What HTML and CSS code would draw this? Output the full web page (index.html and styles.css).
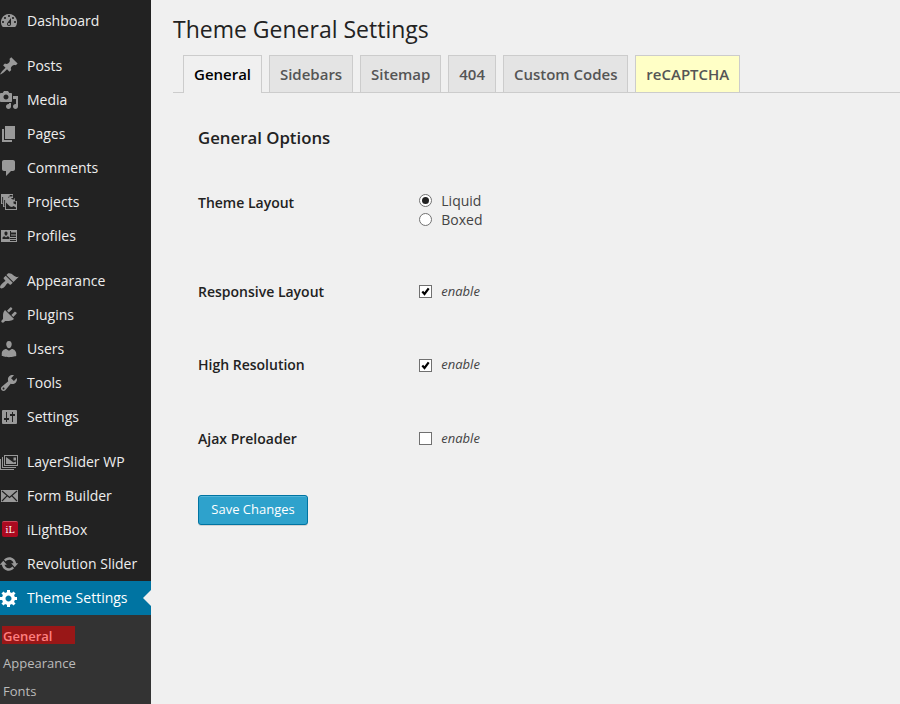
FILE: index.html
```
<!DOCTYPE html>
<html lang="en">
<head>
<meta charset="utf-8">
<title>Theme General Settings</title>
<link rel="stylesheet" href="styles.css">
</head>
<body>
<div class="layout">
  <nav class="sidebar">
    <ul class="menu">
      <li class="item"><svg class="icon" viewBox="1 0 20 20"><path fill-rule="evenodd" d="M3.76 16h12.48A7.998 7.998 0 0 0 10 3 7.998 7.998 0 0 0 3.76 16zM10 4c.55 0 1 .45 1 1s-.45 1-1 1-1-.45-1-1 .45-1 1-1zM6 6c.55 0 1 .45 1 1s-.45 1-1 1-1-.45-1-1 .45-1 1-1zm8 0c.55 0 1 .45 1 1s-.45 1-1 1-1-.45-1-1 .45-1 1-1zm-5.370 5.550L12 7v6c0 1.100-.9 2-2 2s-2-.9-2-2c0-.57.24-1.080.63-1.450zM4 10c.55 0 1 .45 1 1s-.45 1-1 1-1-.45-1-1 .45-1 1-1zm12 0c.55 0 1 .45 1 1s-.45 1-1 1-1-.45-1-1 .45-1 1-1zm-5 3c0-.55-.45-1-1-1s-1 .45-1 1 .45 1 1 1 1-.45 1-1z"/></svg>Dashboard</li>
    </ul>
    <ul class="menu">
      <li class="item"><svg class="icon" viewBox="1 0 20 20"><path d="M10.440 3.020l1.820-1.820 6.360 6.350-1.830 1.820c-1.050-.68-2.480-.57-3.410.36l-.75.75c-.92.93-1.040 2.350-.35 3.410l-1.830 1.820-2.410-2.410-2.800 2.790c-.42.42-3.380 2.710-3.800 2.290s1.860-3.390 2.280-3.810l2.790-2.790L4.100 9.360l1.830-1.820c1.050.69 2.480.57 3.400-.36l.75-.75c.93-.92 1.050-2.350.36-3.410z"/></svg>Posts</li>
      <li class="item"><svg class="icon" viewBox="1 0 20 20"><path fill-rule="evenodd" d="M13 11V4c0-.55-.45-1-1-1h-1.670L9 1H5L3.670 3H2c-.55 0-1 .45-1 1v7c0 .55.45 1 1 1h10c.55 0 1-.45 1-1zM7 4.500c1.380 0 2.500 1.120 2.500 2.500S8.380 9.500 7 9.500 4.500 8.380 4.500 7 5.620 4.500 7 4.500zM14 6h5v10.500c0 1.380-1.120 2.500-2.500 2.500S14 17.880 14 16.500s1.120-2.500 2.500-2.500c.17 0 .34.02.5.05V9h-3V6zm-4 8.050V13h2v3.500c0 1.380-1.120 2.500-2.500 2.500S7 17.880 7 16.500 8.120 14 9.500 14c.17 0 .34.02.5.05z"/></svg>Media</li>
      <li class="item"><svg class="icon" viewBox="1 0 20 20"><path d="M6 15V2h10v13H6zm-1 1h8v2H3V5h2v11z"/></svg>Pages</li>
      <li class="item"><svg class="icon" viewBox="1 0 20 20"><path d="M5 2h9c1.100 0 2 .9 2 2v7c0 1.100-.9 2-2 2h-2l-5 5v-5H5c-1.100 0-2-.9-2-2V4c0-1.100.9-2 2-2z"/></svg>Comments</li>
      <li class="item"><svg class="icon" viewBox="1 0 20 20"><path d="M2 2h12v4h2v3h2v9H6v-3H4v-3H2z"/><path class="hole" d="M3.200 5h.9v6.500h-.9zM5.200 8h.9v6.500h-.9zM11 3h2.500v1.500H10zM12 6h3.500v1.800L13 7.300zM7 10.500l4 4 2 .5 1.500-1 2.500 1.500V17H7zM9 4.500l1.500.8L9.700 6zM14.500 9.500h2.500v3l-2.500-1z"/></svg>Projects</li>
      <li class="item"><svg class="icon" viewBox="1 0 20 20"><path fill-rule="evenodd" d="M2 4h16v12H2zM3 5v10h14V5z"/><path d="M3 5h8v10H3zM12 8.500h5v1h-5zM11 11h6v1h-6zM11 13h6v1h-6zM12 5h5v1.500h-5z"/><path class="hole" d="M7 5.500c1.300 0 1.700 1 1.500 2.200C8.300 9 7.800 9.500 7 9.500S5.700 9 5.500 7.700C5.300 6.500 5.700 5.500 7 5.500zM3.500 13v-1c0-1 .9-1.700 2-1.700L7 11.500l1.500-1.200c1.100 0 2 .7 2 1.700v1z"/></svg>Profiles</li>
    </ul>
    <ul class="menu">
      <li class="item"><svg class="icon" viewBox="1 0 20 20"><path d="M14.480 11.060L7.410 3.990l1.500-1.500c.5-.56 2.300-.47 3.510.32 1.210.8 1.430 1.280 2.910 2.100 1.180.64 2.450 1.260 4.450.85zm-.71.71L6.700 4.700 4.930 6.470c-.39.39-.39 1.020 0 1.410l1.060 1.060c.39.39.39 1.030 0 1.420-.6.6-1.430 1.110-2.210 1.690-.35.26-.7.53-1.010.84C1.430 14.230.4 16.080 1.400 17.070c.99 1 2.840-.03 4.180-1.360.31-.31.58-.66.85-1.020.57-.78 1.080-1.610 1.690-2.210.39-.39 1.020-.39 1.410 0l1.060 1.060c.39.39 1.020.39 1.410 0z"/></svg>Appearance</li>
      <li class="item"><svg class="icon" viewBox="1 0 20 20"><path d="M13.110 4.360L9.870 7.600 8 5.730l3.240-3.240c.35-.34 1.050-.2 1.560.32.52.51.66 1.210.31 1.550zm-8 1.770l.91-1.120 9.010 9.010-1.190.84c-.71.71-2.630 1.160-3.820 1.160H6.140L4.900 17.260c-.59.59-1.540.59-2.120 0-.59-.58-.59-1.530 0-2.120l1.240-1.240v-3.880c0-1.130.4-3.190 1.090-3.890zm7.260 3.970l3.240-3.240c.34-.35 1.040-.21 1.550.31.52.51.66 1.210.31 1.550l-3.240 3.250z"/></svg>Plugins</li>
      <li class="item"><svg class="icon" viewBox="1 0 20 20"><path d="M10 9.250c-2.270 0-2.730-3.440-2.730-3.440C7 4.020 7.820 2 9.970 2c2.160 0 2.980 2.020 2.710 3.810 0 0-.41 3.440-2.680 3.440zm0 2.570L12.720 10c2.390 0 4.520 2.330 4.520 4.530v2.490s-3.650 1.130-7.240 1.130c-3.650 0-7.240-1.130-7.240-1.130v-2.490c0-2.250 1.940-4.480 4.470-4.480z"/></svg>Users</li>
      <li class="item"><svg class="icon" viewBox="1 0 20 20"><path fill-rule="evenodd" d="M16.680 9.770c-1.340 1.340-3.300 1.670-4.950.99l-5.410 6.520c-.99.99-2.590.99-3.580 0s-.99-2.590 0-3.570l6.520-5.420c-.68-1.650-.35-3.610.99-4.950 1.280-1.280 3.120-1.620 4.720-1.060l-2.890 2.890 2.820 2.820 2.860-2.870c.53 1.580.18 3.390-1.080 4.650zM3.810 16.210c.4.390 1.040.39 1.430 0 .4-.4.4-1.040 0-1.430-.39-.4-1.030-.4-1.430 0-.39.39-.39 1.030 0 1.430z"/></svg>Tools</li>
      <li class="item"><svg class="icon" viewBox="1 0 20 20"><rect x="3" y="3" width="15" height="14" rx="1"/><path class="hole" d="M7 5h1v6h2v2H8v2H7v-2H5v-2h2zM13 5h1v2h2v2h-2v6h-1V9h-2V7h2z"/></svg>Settings</li>
    </ul>
    <ul class="menu">
      <li class="item"><svg class="icon" viewBox="1 0 20 20"><path fill-rule="evenodd" d="M5 3h14v11H5zM6 4v9h12V4zM3 5h1v10h13v1H3zM1 7h1v10h13v1H1z"/><path d="M7 5v7h10V9.500l-2.500 1L7 5zM14.500 5.500h2.500v3h-2.500z"/></svg>LayerSlider WP</li>
      <li class="item"><svg class="icon" viewBox="1 0 20 20"><path d="M2 4h17v12H2z"/><path class="fold" d="M3 5l7.500 6.500L18 5M3 15l5-5.200M18 15l-5-5.200"/></svg>Form Builder</li>
      <li class="item"><span class="icon"><span class="badge">iL</span></span>iLightBox</li>
      <li class="item"><svg class="icon" viewBox="1 0 20 20"><path d="M10.200 3.280c3.530 0 6.430 2.610 6.920 6h2.080l-3.500 4-3.500-4h2.320c-.45-1.970-2.210-3.450-4.320-3.450-1.450 0-2.730.71-3.540 1.780L4.950 5.660C6.230 4.200 8.110 3.280 10.200 3.280zm-.4 13.440c-3.520 0-6.430-2.610-6.920-6H.8l3.500-4c1.170 1.330 2.330 2.670 3.500 4H5.480c.45 1.970 2.210 3.450 4.320 3.450 1.450 0 2.730-.71 3.540-1.780l1.710 1.950c-1.280 1.460-3.150 2.380-5.250 2.380z"/></svg>Revolution Slider</li>
      <li class="item current"><svg class="icon" viewBox="1 0 20 20"><path fill-rule="evenodd" d="M18 12h-2.180c-.17.7-.44 1.350-.81 1.930l1.540 1.540-2.100 2.100-1.540-1.540c-.58.36-1.230.63-1.910.79V19H8v-2.180c-.68-.16-1.330-.43-1.910-.79l-1.540 1.540-2.120-2.120 1.540-1.540c-.36-.58-.63-1.230-.79-1.910H1V9.030h2.170c.16-.7.44-1.350.8-1.940L2.430 5.550l2.100-2.100 1.540 1.540c.58-.37 1.240-.64 1.930-.81V2h3v2.180c.68.16 1.330.43 1.910.79l1.540-1.540 2.120 2.120-1.540 1.540c.36.59.64 1.240.8 1.940H18V12zm-8.500 1.500c1.660 0 3-1.340 3-3s-1.340-3-3-3-3 1.340-3 3 1.340 3 3 3z"/></svg>Theme Settings</li>
    </ul>
    <ul class="submenu">
      <li class="sub active"><span class="mark">General</span></li>
      <li class="sub">Appearance</li>
      <li class="sub">Fonts</li>
    </ul>
  </nav>
  <main class="content">
    <h1 class="title">Theme General Settings</h1>
    <div class="tabs">
      <a class="tab selected">General</a>
      <a class="tab">Sidebars</a>
      <a class="tab">Sitemap</a>
      <a class="tab">404</a>
      <a class="tab">Custom Codes</a>
      <a class="tab highlight">reCAPTCHA</a>
    </div>
    <form class="form">
      <h2 class="heading">General Options</h2>
      <div class="row layout-row">
        <span class="label">Theme Layout</span>
        <div class="choices">
          <label class="choice"><svg class="control" viewBox="0 0 13 13"><circle class="box" cx="6.500" cy="6.500" r="6"/><circle class="dot" cx="6.500" cy="6.500" r="3.500"/></svg>Liquid</label>
          <label class="choice"><svg class="control" viewBox="0 0 13 13"><circle class="box" cx="6.500" cy="6.500" r="6"/></svg>Boxed</label>
        </div>
      </div>
      <div class="row">
        <span class="label low">Responsive Layout</span>
        <label class="choice enable"><svg class="control" viewBox="0 0 13 13"><rect class="box" x=".5" y=".5" width="12" height="12"/><path class="tick" d="M3.300 6.500L5.500 9 9.700 3.300"/></svg>enable</label>
      </div>
      <div class="row">
        <span class="label">High Resolution</span>
        <label class="choice enable"><svg class="control low" viewBox="0 0 13 13"><rect class="box" x=".5" y=".5" width="12" height="12"/><path class="tick" d="M3.300 6.500L5.500 9 9.700 3.300"/></svg>enable</label>
      </div>
      <div class="row">
        <span class="label low">Ajax Preloader</span>
        <label class="choice enable"><svg class="control" viewBox="0 0 13 13"><rect class="box" x=".5" y=".5" width="12" height="12"/></svg>enable</label>
      </div>
      <button class="save" type="button">Save Changes</button>
    </form>
  </main>
</div>
</body>
</html>
```
FILE: styles.css
```
* { box-sizing: border-box; }

body {
  margin: 0;
  background: #f0f0f0;
  color: #444;
  font-family: "Open Sans", sans-serif;
  font-size: 14px;
}

.layout {
  display: grid;
  grid-template-columns: 151px 1fr;
  height: 704px;
  overflow: hidden;
}

.sidebar {
  display: flex;
  flex-direction: column;
  padding-top: 4px;
  background: #222;
  color: #eee;
}

.menu, .submenu { margin: 0; padding: 0; list-style: none; }
.menu + .menu { margin-top: 11px; }

.item {
  display: flex;
  align-items: center;
  gap: 7px;
  height: 34px;
  line-height: 20px;
  white-space: nowrap;
}

.icon {
  flex: none;
  display: block;
  width: 20px;
  height: 20px;
  fill: #999;
}
.hole { fill: #222; }
.fold { fill: none; stroke: #222; stroke-width: 1.2; }

.badge {
  display: block;
  width: 16px;
  height: 16px;
  margin: 1px 0 0 2px;
  border-radius: 2px;
  border-top: 1px solid #c8485a;
  background: #ab0a20;
  color: #fff;
  font: 9px/16px "DejaVu Serif", serif;
  text-align: center;
}

.current { position: relative; background: #0074a2; color: #fff; }
.current .icon { fill: #fff; }
.current::after {
  content: "";
  position: absolute;
  top: 9px;
  right: 0;
  border: 8px solid transparent;
  border-left-width: 0;
  border-right-color: #f0f0f0;
}

.submenu {
  flex: 1;
  padding: 7px 0 0 2px;
  background: #333;
  color: #bbb;
  font-size: 13px;
}
.sub { height: 28px; padding: 5px 0 0 1px; line-height: 18px; }
.active { height: 27px; padding: 4px 0 0; font-weight: 600; }
.mark {
  display: block;
  width: 73px;
  height: 18px;
  padding: 1px 0 0 1px;
  background: #991717;
  color: #ff8080;
}

.content { padding-left: 22px; }

.title {
  margin: 0;
  padding-top: 15px;
  color: #222;
  font-size: 23px;
  font-weight: 400;
  line-height: 29px;
}

.tabs {
  display: flex;
  gap: 6.88px;
  height: 38px;
  margin-top: 11px;
  padding-left: 10px;
  border-bottom: 1px solid #ccc;
}
.tab {
  height: 37px;
  padding: 5px 10px 6px;
  border: 1px solid #ccc;
  border-bottom: 0;
  background: #e4e4e4;
  color: #555;
  font-size: 15px;
  font-weight: 600;
  line-height: 26px;
  white-space: nowrap;
}
.selected { height: 38px; background: #f0f0f0; color: #000; }
.highlight { background: #ffffc6; }

.form { padding: 33px 0 0 25px; }
.heading {
  margin: 0 0 41px;
  color: #222;
  font-size: 16.8px;
  font-weight: 600;
  line-height: 24px;
}
.row {
  display: grid;
  grid-template-columns: 221px 1fr;
  align-items: center;
  height: 24px;
  margin-bottom: 49.5px;
}
.layout-row { align-items: start; height: 38px; margin-bottom: 50.3px; }
.label { color: #222; font-weight: 600; line-height: 24px; }
.choice {
  display: flex;
  align-items: center;
  gap: 9.3px;
  height: 19px;
  line-height: 19px;
}
.enable { font-size: 13px; font-style: italic; }

.control { flex: none; width: 13px; height: 13px; }
.label.low { padding-top: 1px; }
.control.low { margin-top: 1px; }
.box { fill: #fff; stroke: #707070; }
.dot { fill: #222; }
.tick { fill: none; stroke: #000; stroke-width: 2.2; }

.save {
  display: block;
  width: 110px;
  height: 30px;
  margin: -5.3px 0 0;
  padding: 0 0 2px;
  border: 1px solid #0074a2;
  border-radius: 3px;
  background: #2ea2cc;
  box-shadow: inset 0 1px 0 rgba(120, 200, 230, .5), 0 1px 0 rgba(0, 0, 0, .12);
  color: #fff;
  font: 13px/26px "Open Sans", sans-serif;
}
```
